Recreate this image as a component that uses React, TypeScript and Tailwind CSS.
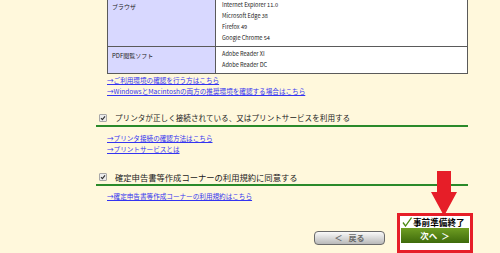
import React from 'react';

const Check = () => (
  <span className="flex h-[8px] w-[8px] items-center justify-center rounded-[1px] border border-[#a8a8a8] bg-[#ececec]">
    <svg width="6" height="6" viewBox="0 0 6 6">
      <path d="M1 3.2 L2.4 4.6 L5 1.4" fill="none" stroke="#333" strokeWidth="1.2" />
    </svg>
  </span>
);

const Link = ({ children }: { children: React.ReactNode }) => (
  <div className="h-[11px] text-[6.6px] leading-[11px] text-[#3434f0] underline">{children}</div>
);

const App = () => {
  const browsers = ['Internet Explorer 11.0', 'Microsoft Edge 38', 'Firefox 49', 'Google Chrome 54'];
  const readers = ['Adobe Reader XI', 'Adobe Reader DC'];

  return (
    <div
      className="relative h-[253px] w-[500px] overflow-hidden bg-[#fff8dc] text-[#222]"
      style={{ fontFamily: '"Noto Sans CJK JP", "Noto Sans", sans-serif' }}
    >
      {/* environment table */}
      <div className="ml-[107px] mt-[-3px] w-[361px] border border-[#5a5a5a]">
        <div className="grid h-[48px] grid-cols-[108px_1fr]">
          <div className="border-r border-[#5a5a5a] bg-[#d8d8ff] pl-[4px] pt-[3px] text-[6px] leading-[11px]">ブラウザ</div>
          <div className="bg-white pl-[6px] pt-[2px] text-[5.6px] leading-[11px]">
            {browsers.map((b) => (
              <div key={b}>{b}</div>
            ))}
          </div>
        </div>
        <div className="grid h-[27px] grid-cols-[108px_1fr] border-t border-[#5a5a5a]">
          <div className="border-r border-[#5a5a5a] bg-[#d8d8ff] pl-[4px] pt-[3px] text-[6px] leading-[11px]">PDF閲覧ソフト</div>
          <div className="bg-white pl-[6px] pt-[2px] text-[5.6px] leading-[11px]">
            {readers.map((r) => (
              <div key={r}>{r}</div>
            ))}
          </div>
        </div>
      </div>

      <div className="ml-[107px] mt-[1px]">
        <Link>→ご利用環境の確認を行う方はこちら</Link>
        <Link>→WindowsとMacintoshの両方の推奨環境を確認する場合はこちら</Link>
      </div>

      {/* printer */}
      <div className="ml-[96px] mt-[16px] flex h-[14px] w-[372px] items-center gap-[8px] border-b-2 border-[#2a8a2a] pb-[2px] pl-[3px]">
        <Check />
        <span className="text-[7.6px] leading-[12px]">プリンタが正しく接続されている、又はプリントサービスを利用する</span>
      </div>
      <div className="ml-[107px] mt-[6px]">
        <Link>→プリンタ接続の確認方法はこちら</Link>
        <Link>→プリントサービスとは</Link>
      </div>

      {/* terms */}
      <div className="ml-[96px] mt-[17px] flex h-[14px] w-[372px] items-center gap-[8px] border-b-2 border-[#2a8a2a] pb-[2px] pl-[3px]">
        <Check />
        <span className="text-[8.3px] leading-[12px]">確定申告書等作成コーナーの利用規約に同意する</span>
      </div>
      <div className="ml-[107px] mt-[5px]">
        <Link>→確定申告書等作成コーナーの利用規約はこちら</Link>
      </div>

      {/* buttons */}
      <div className="ml-[314px] mt-[11px] flex items-start gap-[12px]">
        <button className="mt-[18px] flex h-[14px] w-[71px] items-center justify-center gap-[6px] rounded-[4px] border border-[#6a6a6a] bg-gradient-to-b from-[#fafafa] to-[#b9b9b9] text-[8px] font-bold text-[#6a6a6a]">
          <span>＜</span>
          <span>戻る</span>
        </button>
        <div className="h-[40px] w-[76px] border-[3px] border-[#e61e28] bg-white p-[1px]">
          <div className="flex h-[10px] items-center gap-[1px] pl-[1px]">
            <svg width="10" height="10" viewBox="0 0 10 10">
              <path d="M1 5.5 L3.5 9 L9.5 0.5" fill="none" stroke="#4d8a12" strokeWidth="1.3" />
            </svg>
            <span className="text-[8.6px] font-bold leading-[10px] text-black">事前準備終了</span>
          </div>
          <div className="mt-[1px] flex h-[15px] items-center justify-center gap-[4px] bg-gradient-to-b from-[#6f9e22] to-[#3e6a0b] text-[8.5px] font-bold text-white">
            <span>次へ</span>
            <span>＞</span>
          </div>
        </div>
      </div>

      {/* annotation arrow */}
      <svg className="absolute left-[431px] top-[171px]" width="27" height="46" viewBox="0 0 27 46">
        <path d="M6 0 H20 V21 H26 L13 45 L0 21 H6 Z" fill="#e61e28" />
      </svg>
    </div>
  );
};

export default App;
